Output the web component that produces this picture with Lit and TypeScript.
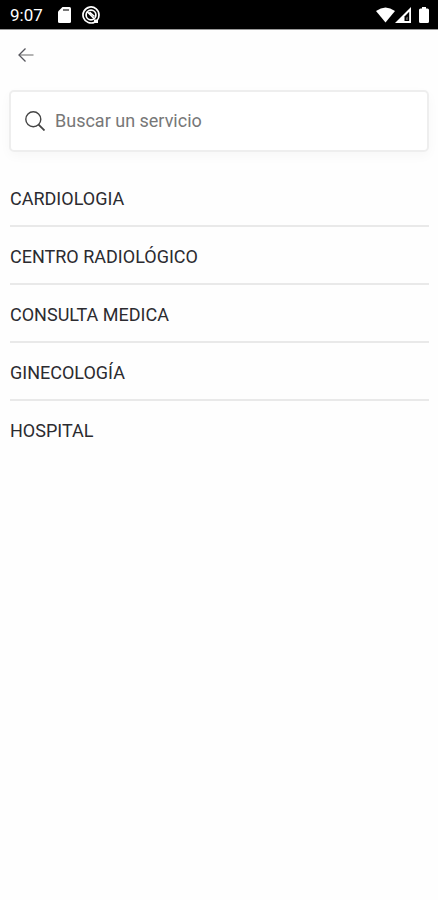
import { LitElement, html, css } from "lit";
import { customElement, state } from "lit/decorators.js";

const SERVICES = [
  "CARDIOLOGIA",
  "CENTRO RADIOLÓGICO",
  "CONSULTA MEDICA",
  "GINECOLOGÍA",
  "HOSPITAL",
];

@customElement("status-bar")
class StatusBar extends LitElement {
  static styles = css`
    :host {
      display: flex;
      align-items: center;
      justify-content: space-between;
      box-sizing: border-box;
      height: 30px;
      padding: 0 9px 0 10px;
      background: #000;
      border-bottom: 1px solid #999;
      color: #fff;
      font-size: 17px;
      line-height: 20px;
    }
    .group {
      display: flex;
      align-items: center;
      padding-top: 1px;
    }
    .card {
      margin: 0 11px 0 15px;
    }
    .battery {
      margin-left: 8px;
    }
    svg {
      display: block;
    }
  `;

  render() {
    return html`
      <div class="group">
        <span>9:07</span>
        <svg class="card" width="13" height="16" viewBox="0 0 13 16" aria-hidden="true">
          <path d="M4.5 0H11.5Q13 0 13 1.5V14.5Q13 16 11.5 16H1.5Q0 16 0 14.5V4.5Z" fill="#fff" />
          <path d="M5 3H11" stroke="#555" stroke-width="1.6" />
        </svg>
        <svg width="18" height="18" viewBox="0 0 18 18" fill="none" stroke="#fff" aria-hidden="true">
          <path d="M13 15.9A8 8 0 1 1 17 9Q17 12.5 15 14.5" stroke-width="1.7" />
          <path d="M12 13.5H16V17H12Z" fill="#fff" stroke="none" />
          <circle cx="9" cy="9" r="4.9" stroke-width="1.7" />
          <path d="M5 5.5L12.5 13M7.5 6L12.5 10.5" stroke-width="1.6" />
        </svg>
      </div>
      <div class="group">
        <svg width="19" height="16" viewBox="0 0 19 16" aria-hidden="true">
          <path d="M0 4Q9.5 -3 19 4L9.500 15.5Z" fill="#fff" />
        </svg>
        <svg width="16" height="16" viewBox="0 0 16 16" aria-hidden="true">
          <path d="M0 16L16 0V16Z" fill="#fff" />
          <path d="M9.500 14V9.500L14.200 4.800V14Z" fill="#000" />
          <path d="M11.300 13V10.800L12.600 9.500V13Z" fill="#777" />
        </svg>
        <svg class="battery" width="10" height="16" viewBox="0 0 10 16" aria-hidden="true">
          <path d="M3 0H7V1.500H8.500Q10 1.500 10 3V14.500Q10 16 8.500 16H1.500Q0 16 0 14.500V3Q0 1.500 1.500 1.500H3Z" fill="#fff" />
        </svg>
      </div>
    `;
  }
}

@customElement("app-root")
class AppRoot extends LitElement {
  static styles = css`
    :host {
      display: block;
      min-height: 100vh;
      background: #fefefe;
      color: #2b2b30;
      font-family: Roboto, "Liberation Sans", sans-serif;
      font-size: 18px;
      line-height: 24px;
    }
    svg {
      display: block;
      flex: none;
    }
    .toolbar {
      display: flex;
      padding: 9px 10px;
    }
    .back {
      display: grid;
      place-items: center;
      width: 32px;
      height: 32px;
      padding: 0;
      border: 0;
      background: none;
    }
    .content {
      padding: 10px 9px;
    }
    .search {
      display: flex;
      align-items: center;
      gap: 10px;
      padding: 17px 14px;
      background: #fff;
      border: 2px solid #eee;
      border-radius: 5px;
      box-shadow: 0 4px 12px rgba(0, 0, 0, 0.03);
    }
    input {
      flex: 1;
      min-width: 0;
      padding: 0;
      border: 0;
      outline: 0;
      background: none;
      color: inherit;
      font: inherit;
    }
    input::placeholder {
      color: #777;
      opacity: 1;
    }
    .list {
      margin: 17px 0 0;
      padding: 0 0 0 1px;
      list-style: none;
    }
    .item + .item {
      border-top: 2px solid #e9e9e9;
    }
    .service {
      display: block;
      width: 100%;
      padding: 18px 0 14px;
      border: 0;
      background: none;
      color: inherit;
      font: inherit;
      text-align: left;
    }
  `;

  @state() private query = "";

  private onInput(event: Event) {
    this.query = (event.target as HTMLInputElement).value;
  }

  render() {
    const query = this.query.trim().toUpperCase();
    const shown = SERVICES.filter((name) => name.includes(query));
    return html`
      <status-bar></status-bar>
      <header class="toolbar">
        <button class="back" aria-label="Volver">
          <svg width="16" height="14" viewBox="0 0 16 14" fill="none" aria-hidden="true">
            <path d="M1.5 7H15.5" stroke="#8a8a8a" stroke-width="1.3" />
            <path d="M7.5 0.5L1 7L7.5 13.5" stroke="#55555c" stroke-width="1.3" />
          </svg>
        </button>
      </header>
      <main class="content">
        <label class="search">
          <svg width="20" height="20" viewBox="0 0 20 20" fill="none" stroke="#444" stroke-width="1.4" aria-hidden="true">
            <circle cx="8.3" cy="8.3" r="7.5" />
            <path d="M13.6 13.6L19.5 19.5" stroke-width="1.8" />
          </svg>
          <input
            type="text"
            placeholder="Buscar un servicio"
            aria-label="Buscar un servicio"
            .value=${this.query}
            @input=${this.onInput}
          />
        </label>
        <ul class="list">
          ${shown.map(
            (name) => html`<li class="item"><button class="service">${name}</button></li>`,
          )}
        </ul>
      </main>
    `;
  }
}
